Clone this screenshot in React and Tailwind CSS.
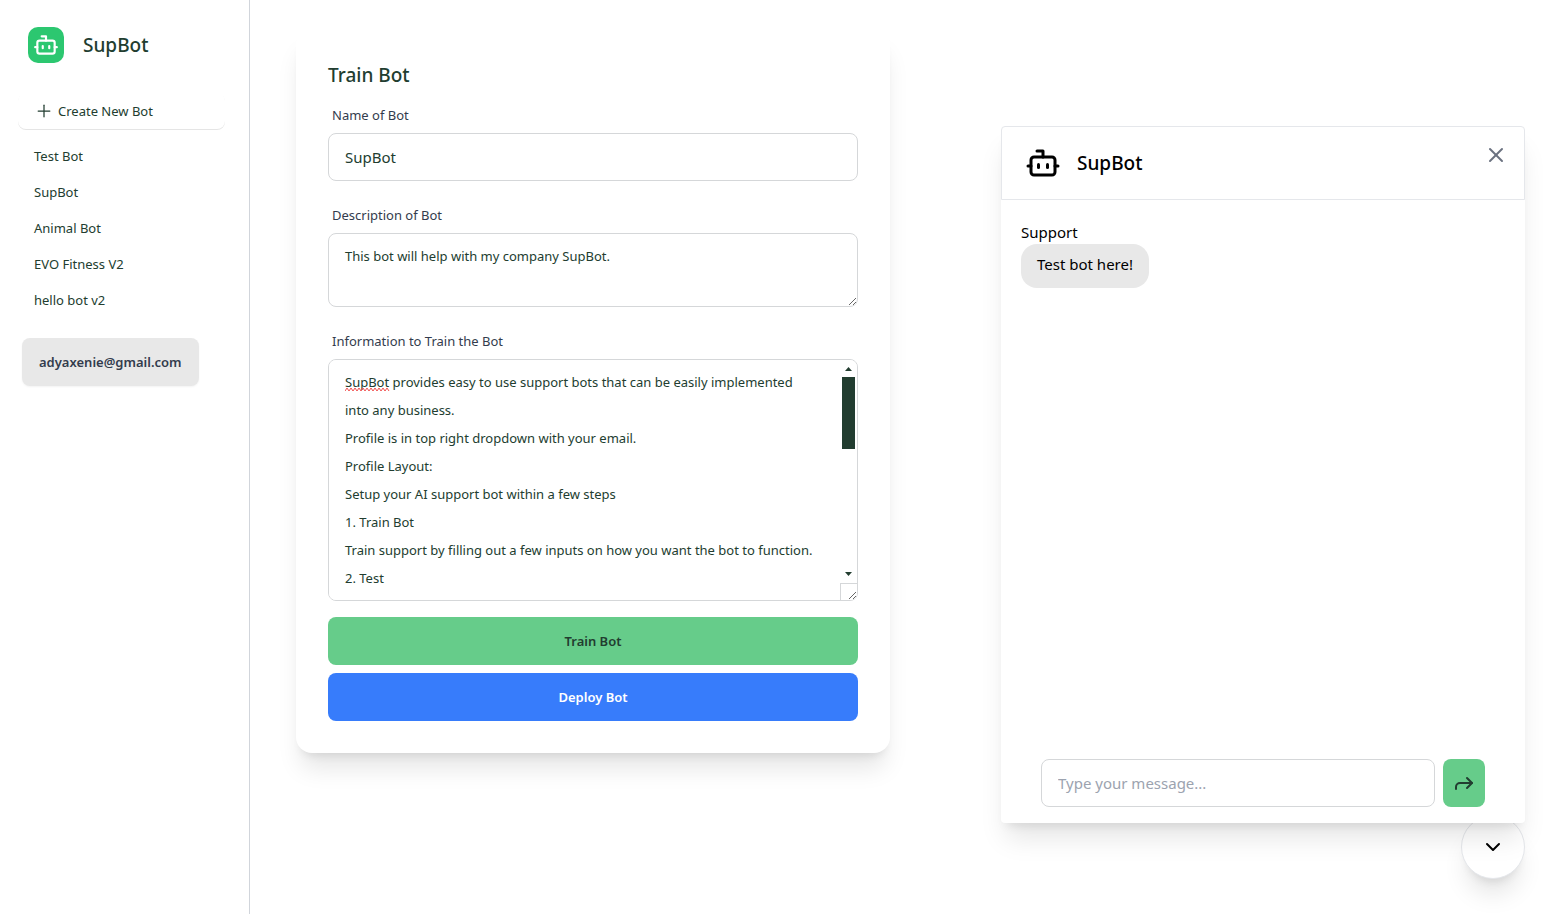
import { useState } from "react";
import { Bot, ChevronDown, Forward, Plus, X } from "lucide-react";

const bots = ["Test Bot", "SupBot", "Animal Bot", "EVO Fitness V2", "hello bot v2"];

const trainingText = `SupBot provides easy to use support bots that can be easily implemented into any business.
Profile is in top right dropdown with your email.
Profile Layout:
Setup your AI support bot within a few steps
1. Train Bot
Train support by filling out a few inputs on how you want the bot to function.
2. Test
3. Deploy
`;

const fieldClass =
	"block w-full rounded-lg border border-[#d5d7d9] bg-white text-[#223d30] outline-none focus:border-[#66cc8a]";

function Sidebar() {
	return (
		<aside className="w-[250px] shrink-0 border-r border-[#d1d5db] px-[18px] pt-[27px]">
			<div className="flex items-center gap-[19px] px-[10px]">
				<span className="grid size-9 place-items-center rounded-[10px] bg-[#2cc770] text-white">
					<Bot size={26} />
				</span>
				<span className="text-[19px]/7 font-medium text-[#223d30]">SupBot</span>
			</div>

			<nav className="mt-[30px] text-[13px]/5 text-[#223d30]">
				<button className="flex h-9 w-full max-w-[207px] items-center gap-1 rounded-lg px-4 shadow-[0_1px_0_rgba(0,0,0,0.1)]">
					<Plus size={20} strokeWidth={1.5} />
					Create New Bot
				</button>
				<ul className="mt-[9px]">
					{bots.map((bot) => (
						<li key={bot}>
							<a href="#" className="block px-4 py-2 hover:bg-gray-100">
								{bot}
							</a>
						</li>
					))}
				</ul>
			</nav>

			<button className="mt-5 ml-1 h-12 rounded-lg bg-[#e8e8e8] px-[17px] text-[13px]/5 font-semibold text-[#333c4d] shadow-xs">
				adyaxenie@gmail.com
			</button>
		</aside>
	);
}

function Field({ id, label, children }) {
	return (
		<div>
			<label htmlFor={id} className="block px-1 py-2 text-[13px]/5 text-[#333c4d]">
				{label}
			</label>
			{children}
		</div>
	);
}

// Textarea with its own dark scrollbar; the native one is hidden
function ScrollTextarea({ id, value, onChange }) {
	const [progress, setProgress] = useState(0);

	const handleScroll = (e) => {
		const { scrollTop, scrollHeight, clientHeight } = e.target;
		const max = scrollHeight - clientHeight;
		setProgress(max > 0 ? scrollTop / max : 0);
	};

	return (
		<div className="relative">
			<textarea
				id={id}
				rows={8}
				value={value}
				onChange={onChange}
				onScroll={handleScroll}
				className={`${fieldClass} resize py-2 pr-10 pl-4 text-[13px]/7 [scrollbar-width:none]`}
			/>
			<svg
				className="pointer-events-none absolute top-7 left-[17px]"
				width="45"
				height="5"
				fill="none"
				stroke="#f0504f"
			>
				<path d="M0 4l2-3 2 3 2-3 2 3 2-3 2 3 2-3 2 3 2-3 2 3 2-3 2 3 2-3 2 3 2-3 2 3 2-3 2 3 2-3 2 3 2-3 2 3" />
			</svg>
			<div className="pointer-events-none absolute inset-y-px right-px flex w-4 flex-col">
				<svg className="h-[17px] w-[15px]" viewBox="0 0 15 17" fill="#223d30">
					<path d="M4 11h7L7.5 7z" />
				</svg>
				<div className="min-h-0 flex-1">
					<div
						className="ml-px h-[72px] w-[13px] bg-[#223d30]"
						style={{ marginTop: progress * 117 }}
					/>
				</div>
				<svg className="h-[17px] w-[15px]" viewBox="0 0 15 17" fill="#223d30">
					<path d="M4 6h7L7.5 10z" />
				</svg>
				<div className="-ml-px h-[17px] border-t border-l border-[#d5d7d9]" />
			</div>
		</div>
	);
}

function TrainForm() {
	const [name, setName] = useState("SupBot");
	const [description, setDescription] = useState(
		"This bot will help with my company SupBot."
	);
	const [info, setInfo] = useState(trainingText);

	return (
		<form
			onSubmit={(e) => e.preventDefault()}
			className="w-full max-w-[594px] self-start rounded-2xl bg-white p-8 shadow-xl"
		>
			<h1 className="mb-2 text-[19px]/7 font-medium text-[#223d30]">Train Bot</h1>
			<div className="space-y-4">
				<Field id="bot-name" label="Name of Bot">
					<input
						id="bot-name"
						value={name}
						onChange={(e) => setName(e.target.value)}
						className={`${fieldClass} h-12 px-4 text-[15px]/6`}
					/>
				</Field>
				<Field id="bot-description" label="Description of Bot">
					<textarea
						id="bot-description"
						rows={2}
						value={description}
						onChange={(e) => setDescription(e.target.value)}
						className={`${fieldClass} resize px-4 py-2 text-[13px]/7`}
					/>
				</Field>
				<Field id="bot-info" label="Information to Train the Bot">
					<ScrollTextarea
						id="bot-info"
						value={info}
						onChange={(e) => setInfo(e.target.value)}
					/>
				</Field>
				<div className="space-y-2 text-[13px]/5 font-semibold">
					<button className="block h-12 w-full rounded-lg bg-[#66cc8a] text-[#223d30]">
						Train Bot
					</button>
					<button type="button" className="block h-12 w-full rounded-lg bg-[#377cfb] text-white">
						Deploy Bot
					</button>
				</div>
			</div>
		</form>
	);
}

function ChatWidget() {
	const [message, setMessage] = useState("");

	return (
		<div className="flex w-full max-w-[524px] flex-col items-end">
			<section className="relative z-10 w-full rounded-sm bg-white text-[15px]/6 text-black shadow-xl">
				<header className="flex justify-between rounded-t-sm border border-[#e5e7eb] py-4 pr-4 pl-[23px]">
					<div className="flex h-10 items-center gap-4">
						<Bot size={36} />
						<h2 className="text-[19px]/7 font-medium">SupBot</h2>
					</div>
					<button aria-label="Close chat" className="self-start text-[#6b7280]">
						<X size={24} strokeWidth={2} />
					</button>
				</header>
				<div className="min-h-[559px] px-5 pt-5">
					<p>Support</p>
					<p className="inline-block rounded-2xl bg-[#e8e8e8] px-4 pt-2 pb-3">
						Test bot here!
					</p>
				</div>
				<form
					onSubmit={(e) => e.preventDefault()}
					className="flex gap-2 px-10 pb-4"
				>
					<input
						aria-label="Message"
						placeholder="Type your message..."
						value={message}
						onChange={(e) => setMessage(e.target.value)}
						className={`${fieldClass} h-12 min-w-0 flex-1 px-4 placeholder:text-[#9ca3af]`}
					/>
					<button
						aria-label="Send"
						className="grid h-12 w-[42px] place-items-center rounded-lg bg-[#66cc8a] text-[#223d30]"
					>
						<Forward size={24} />
					</button>
				</form>
			</section>
			<button
				aria-label="Toggle chat"
				className="-mt-2 grid size-16 place-items-center rounded-full border border-[#e5e7eb] bg-white text-black shadow-xl"
			>
				<ChevronDown size={24} />
			</button>
		</div>
	);
}

export default function App() {
	return (
		<div className="flex min-h-screen bg-white font-['Noto_Sans','Open_Sans',sans-serif]">
			<Sidebar />
			<main className="flex flex-1 justify-between gap-10 pt-[29px] pr-[35px] pb-[35px] pl-[46px]">
				<TrainForm />
				<div className="flex flex-1 items-end justify-end">
					<ChatWidget />
				</div>
			</main>
		</div>
	);
}
